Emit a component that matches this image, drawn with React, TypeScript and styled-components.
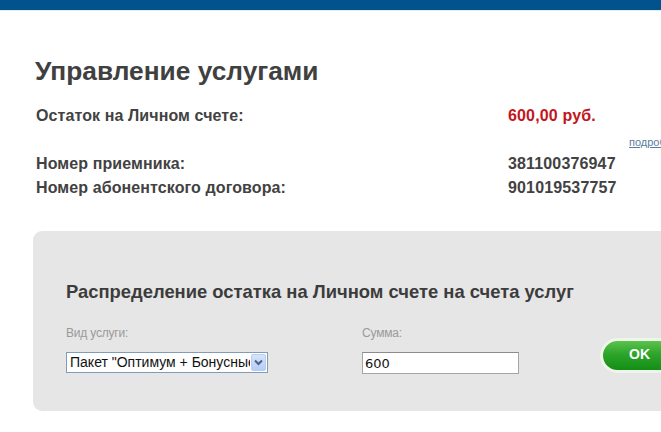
import React from "react";
import styled, { createGlobalStyle } from "styled-components";

const Global = createGlobalStyle`
  html, body { margin: 0; padding: 0; background: #ffffff; }
  body { font-family: "Liberation Sans", Arial, sans-serif; color: #3a3a3a; overflow: hidden; }
`;

const Page = styled.div`
  width: 661px;
  height: 432px;
  overflow: hidden;
  background: #ffffff;
`;

const TopBar = styled.div`
  height: 10px;
  background: #02538d;
  border-bottom: 1px solid #dfeef5;
`;

const Content = styled.div`
  padding: 45px 0 0 33px;
  width: 700px;
`;

const Title = styled.h1`
  margin: 0 0 0 2px;
  font-size: 26.3px;
  line-height: 30px;
  font-weight: bold;
  color: #404040;
`;

const InfoGrid = styled.div`
  margin: 18px 0 0 3px;
  display: grid;
  grid-template-columns: 472px 121px auto;
  grid-auto-rows: 24px;
  font-size: 16px;
  line-height: 24px;
  color: #363636;
`;

const Key = styled.div`
  font-weight: bold;
  color: #424242;
  white-space: nowrap;
  letter-spacing: 0.1px;
`;

const Spacer = styled.div<{ $h: number }>`
  height: ${(p) => p.$h}px;
`;

const Value = styled.div<{ $accent?: boolean }>`
  color: ${(p) => (p.$accent ? "#c3161c" : "#424242")};
  font-weight: bold;
  white-space: nowrap;
  letter-spacing: 0.15px;
`;

const MoreLink = styled.a`
  font-size: 11px;
  line-height: 11px;
  color: #5b7d9b;
  text-decoration: underline;
  white-space: nowrap;
  padding-top: 9px;
`;

const Panel = styled.div`
  margin-top: 31px;
  height: 180px;
  box-sizing: border-box;
  background: #e6e6e6;
  border-radius: 9px;
  padding: 50px 0 0 33px;
`;

const PanelTitle = styled.h2`
  margin: 0;
  font-size: 18.4px;
  line-height: 22px;
  font-weight: bold;
  color: #3c3c3c;
  white-space: nowrap;
`;

const Form = styled.div`
  margin-top: 23px;
  display: grid;
  grid-template-columns: 296px 238px auto;
  grid-template-rows: 14px 22px;
  row-gap: 12px;
`;

const Label = styled.div`
  font-size: 12px;
  line-height: 14px;
  color: #9a9a9a;
  letter-spacing: -0.2px;
`;

const SelectBox = styled.div`
  width: 202px;
  height: 21px;
  box-sizing: border-box;
  border: 1px solid #7f9db9;
  background: #ffffff;
  display: flex;
  align-items: stretch;
`;

const SelectText = styled.div`
  flex: 1;
  overflow: hidden;
  white-space: nowrap;
  font-size: 14px;
  line-height: 19px;
  padding-left: 3px;
  color: #111;
`;

const ArrowBox = styled.div`
  width: 15px;
  margin: 1px;
  border-radius: 2px;
  background: linear-gradient(#d6e4fb, #b5cdf6);
  border: 1px solid #b9cdee;
  box-sizing: border-box;
  display: flex;
  align-items: center;
  justify-content: center;
`;

const Input = styled.input`
  width: 157px;
  height: 22px;
  box-sizing: border-box;
  border: 1px solid #a5a5a5;
  border-top-color: #8c8c8c;
  background: #fff;
  font-family: "DejaVu Sans", "Liberation Sans", sans-serif;
  font-size: 13px;
  padding: 0 2px;
  color: #111;
  outline: none;
`;

const OkButton = styled.button`
  grid-column: 3;
  grid-row: 1 / span 2;
  align-self: end;
  margin: 0 0 1px 0;
  width: 84px;
  height: 35px;
  box-sizing: border-box;
  border-radius: 18px;
  border: 3px solid #eef6ea;
  background: linear-gradient(#5cc24e 0%, #2ea52a 45%, #138d17 100%);
  color: #ffffff;
  font-family: "Liberation Sans", Arial, sans-serif;
  font-weight: bold;
  font-size: 14px;
  text-align: left;
  padding: 0 0 3px 26px;
  box-shadow: 0 0 1px #cfe3cc;
`;

export default function App() {
  return (
    <Page>
      <Global />
      <TopBar />
      <Content>
        <Title>Управление услугами</Title>
        <InfoGrid>
          <Key>Остаток на Личном счете:</Key>
          <Value $accent>600,00 руб.</Value>
          <div />
          <Spacer $h={23} />
          <div />
          <MoreLink href="#">подробнее</MoreLink>
          <Key>Номер приемника:</Key>
          <Value>381100376947</Value>
          <div />
          <Key>Номер абонентского договора:</Key>
          <Value>901019537757</Value>
          <div />
        </InfoGrid>
        <Panel>
          <PanelTitle>Распределение остатка на Личном счете на счета услуг</PanelTitle>
          <Form>
            <Label>Вид услуги:</Label>
            <Label>Сумма:</Label>
            <SelectBox>
              <SelectText>Пакет "Оптимум + Бонусные минуты"</SelectText>
              <ArrowBox>
                <svg width="9" height="7" viewBox="0 0 9 7">
                  <path d="M1 1.5 L4.5 5 L8 1.5" fill="none" stroke="#4d6185" strokeWidth="2" />
                </svg>
              </ArrowBox>
            </SelectBox>
            <Input defaultValue="600" />
            <OkButton>OK</OkButton>
          </Form>
        </Panel>
      </Content>
    </Page>
  );
}
